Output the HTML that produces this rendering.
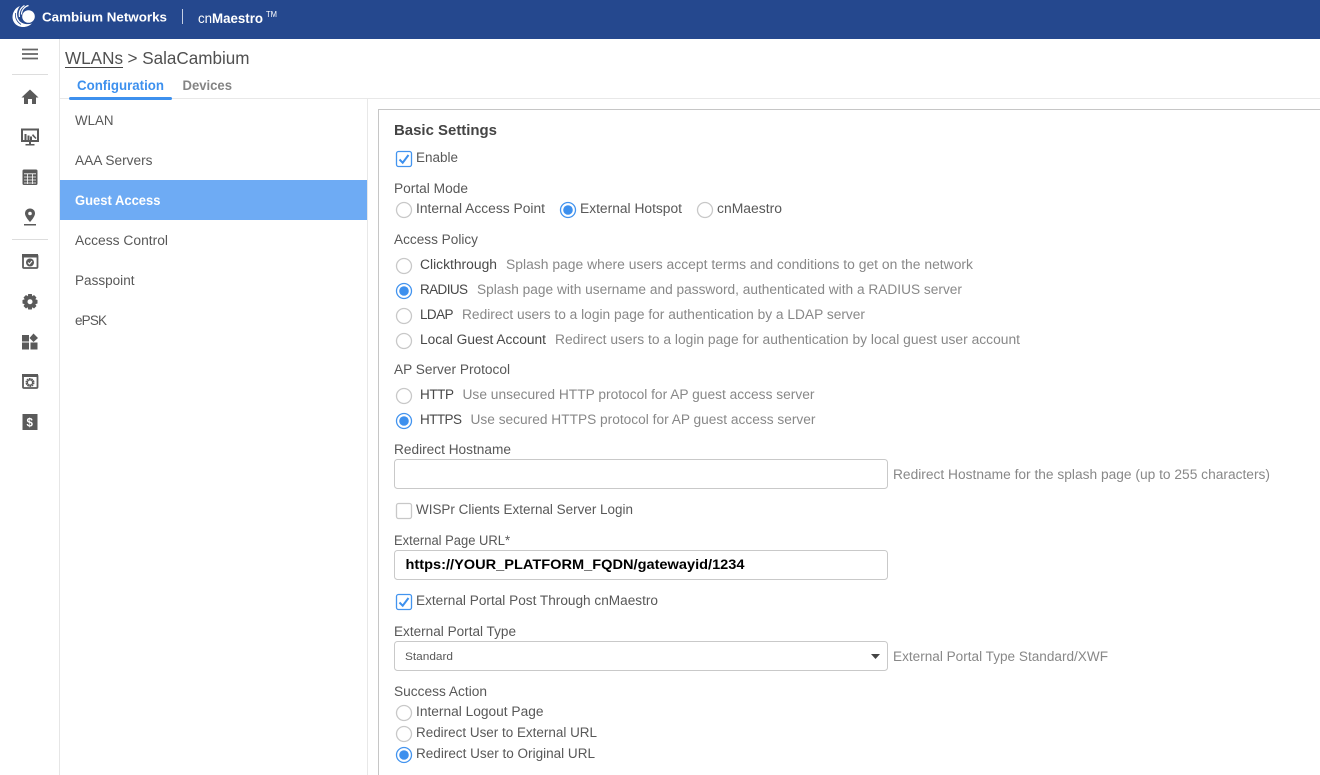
<!DOCTYPE html>
<html><head><meta charset="utf-8"><style>
html,body{margin:0;padding:0;background:#fff;width:1320px;height:775px;overflow:hidden}
svg{display:block}
text{font-family:"Liberation Sans",sans-serif;font-size:13.5px;fill:#585858}
.g{fill:#888}
.d{fill:#484848}
.i{fill:#5a5a5a}
</style></head><body>
<svg width="1320" height="775" viewBox="0 0 1320 775" xmlns="http://www.w3.org/2000/svg">
<rect width="1320" height="39" fill="#25488e"/>
<!-- logo -->
<path d="M20 6C15 8 12.500 12.500 12.500 17C12.500 22.500 17 27 23 27C26.500 27 29.500 25.800 32 23.500C27 25 21 24 18.500 19.500C16 15 17 9.500 20 6Z" fill="#fff"/>
<circle cx="28.500" cy="16.500" r="6.300" fill="#fff"/>
<path d="M24.500 5.500C20.500 8 18.500 12 19.500 17M28.500 5.500C24.500 6.500 21.500 10 21.500 14.500" stroke="#fff" stroke-width="1.200" fill="none"/>
<path d="M15.500 13C15 17 16.500 21.500 21 24.500" stroke="#25488e" stroke-width=".8" fill="none"/>
<text x="42" y="21.500" textLength="125" lengthAdjust="spacingAndGlyphs" style="fill:#fff;font-weight:700;font-size:13px">Cambium Networks</text>
<rect x="182" y="9" width="1" height="15" fill="#c5cfe4"/>
<text x="198" y="23" textLength="65" lengthAdjust="spacingAndGlyphs" style="fill:#fff;font-size:13.500px">cn<tspan font-weight="700">Maestro</tspan></text>
<text x="266" y="17" textLength="11" lengthAdjust="spacingAndGlyphs" style="fill:#fff;font-size:8px">TM</text>

<!-- rails -->
<rect x="59" y="39" width="1" height="736" fill="#e6e6e6"/>
<rect x="367" y="99" width="1" height="676" fill="#e8e8e8"/>
<rect x="60" y="98" width="1260" height="1" fill="#e8e8e8"/>

<!-- hamburger -->
<path d="M22 49.500H38M22 54H38M22 58.500H38" stroke="#666" stroke-width="1.800"/>
<rect x="12" y="74" width="36" height="1" fill="#ddd"/>
<!-- home -->
<path class="i" d="M30 89.500L38.500 97.500H36V104H32V99H28V104H24V97.500H21.500Z"/>
<!-- monitor -->
<path d="M22 129.500H38V141H22Z" fill="none" stroke="#5a5a5a" stroke-width="2"/>
<path class="i" d="M24.500 134H26.500V140H24.500ZM27.500 135.500H29.500V140H27.500ZM30 136.500H32V140H30ZM33 134L36.500 138L35.500 139L32 135.500Z"/>
<path class="i" d="M29 142H31V144H34.500V145.500H25.500V144H29Z"/>
<!-- table -->
<rect x="22.500" y="169.500" width="15" height="15.500" rx="1.500" class="i"/>
<path d="M24 173.800H36M24 177H36M24 180H36M24 183H36M27.500 174V184M32.500 174V184" stroke="#fff" stroke-width=".8"/>
<!-- pin -->
<path class="i" d="M30 208.500C27 208.500 25 210.700 25 213.500C25 216.800 30 222 30 222C30 222 35 216.800 35 213.500C35 210.700 33 208.500 30 208.500Z"/>
<circle cx="30" cy="213.500" r="1.800" fill="#fff"/>
<rect x="24" y="224" width="12" height="1.500" fill="#5a5a5a"/>
<rect x="12" y="239" width="36" height="1" fill="#ddd"/>
<!-- window check -->
<rect x="23" y="255" width="14.500" height="13" fill="#fff" stroke="#5a5a5a" stroke-width="1.800" rx="1"/>
<rect x="22" y="254" width="16" height="3.500" fill="#5a5a5a"/>
<circle cx="30" cy="262.500" r="4" fill="#5a5a5a"/>
<path d="M28 262.500L29.500 264L32 261" stroke="#fff" stroke-width="1" fill="none"/>
<!-- gear -->
<path class="i" d="M28.200 294H31.800L32.300 296.200L34 295L36.500 297.500L35.300 299.300L37.500 300V303.500L35.300 304.200L36.500 306L34 308.500L32.300 307.300L31.800 309.500H28.200L27.700 307.300L26 308.500L23.500 306L24.700 304.200L22.500 303.500V300L24.700 299.300L23.500 297.500L26 295L27.700 296.200Z"/>
<circle cx="30" cy="301.700" r="2.500" fill="#fff"/>
<!-- widgets -->
<path class="i" d="M22 335H29V341.500H22ZM22 342.500H29V349.500H22ZM30.500 342.500H37.500V349.500H30.500ZM33.500 333.500L38 338L33.500 342L29.500 338Z"/>
<!-- window gear -->
<rect x="23" y="375" width="14.500" height="13" fill="#fff" stroke="#5a5a5a" stroke-width="1.800" rx="1"/>
<rect x="22" y="374" width="16" height="3" fill="#5a5a5a"/>
<circle cx="30" cy="382.500" r="3.500" fill="none" stroke="#5a5a5a" stroke-width="2" stroke-dasharray="1.600 .6"/>
<circle cx="30" cy="382.500" r="2.600" fill="none" stroke="#5a5a5a" stroke-width="1.300"/>
<!-- dollar -->
<rect x="22.500" y="414" width="15" height="16" fill="#5a5a5a"/>
<text x="26.500" y="426.500" style="fill:#fff;font-size:11.500px;font-weight:700">$</text>

<!-- title -->
<text x="65" y="64" textLength="58" lengthAdjust="spacingAndGlyphs" style="font-size:17.500px;fill:#505050">WLANs</text>
<rect x="65" y="67" width="58" height="1" fill="#444"/>
<text x="127.500" y="64" textLength="122" lengthAdjust="spacingAndGlyphs" style="font-size:17.500px;fill:#505050">&gt; SalaCambium</text>
<text x="77" y="90" textLength="87" lengthAdjust="spacingAndGlyphs" style="fill:#3d90ee;font-weight:700">Configuration</text>
<text x="182.500" y="90" textLength="49.500" lengthAdjust="spacingAndGlyphs" style="fill:#848484;font-weight:700">Devices</text>
<rect x="69" y="97" width="103" height="3" rx="1.500" fill="#3d90ee"/>

<!-- left menu -->
<rect x="60" y="180" width="307" height="40" fill="#6eabf4"/>
<text x="75" y="125" textLength="38.500" lengthAdjust="spacingAndGlyphs">WLAN</text>
<text x="75" y="165" textLength="77.500" lengthAdjust="spacingAndGlyphs">AAA Servers</text>
<text x="75" y="205" textLength="85.500" lengthAdjust="spacingAndGlyphs" style="fill:#fff;font-weight:700">Guest Access</text>
<text x="75" y="245" textLength="93" lengthAdjust="spacingAndGlyphs">Access Control</text>
<text x="75" y="285" textLength="59.500" lengthAdjust="spacingAndGlyphs">Passpoint</text>
<text x="75" y="325" textLength="32" lengthAdjust="spacing">ePSK</text>

<!-- card -->
<path d="M1320 109.500H378.500V775" fill="none" stroke="#c6c6c6"/>
<text x="394" y="135" textLength="103" lengthAdjust="spacingAndGlyphs" style="fill:#444;font-size:14.500px;font-weight:700">Basic Settings</text>

<!-- enable -->
<rect x="396.500" y="151.500" width="15" height="15" rx="2" fill="#fff" stroke="#4394ef" stroke-width="1.300"/>
<path d="M399.500 159.500L402.700 162.700L408.500 155" fill="none" stroke="#3d90ee" stroke-width="2"/>
<text x="416" y="162" textLength="42" lengthAdjust="spacingAndGlyphs">Enable</text>

<text x="394" y="193" textLength="74" lengthAdjust="spacingAndGlyphs">Portal Mode</text>
<circle cx="404" cy="210" r="7.500" fill="#fff" stroke="#c8c8c8" stroke-width="1.300"/>
<text x="416" y="213" textLength="129" lengthAdjust="spacingAndGlyphs">Internal Access Point</text>
<circle cx="568" cy="210" r="7.500" fill="#fff" stroke="#4394ef" stroke-width="1.300"/><circle cx="568" cy="210" r="4.800" fill="#3d90ee"/>
<text x="580" y="213" textLength="102" lengthAdjust="spacingAndGlyphs">External Hotspot</text>
<circle cx="705" cy="210" r="7.500" fill="#fff" stroke="#c8c8c8" stroke-width="1.300"/>
<text x="717" y="213" textLength="65" lengthAdjust="spacingAndGlyphs">cnMaestro</text>

<text x="394" y="244" textLength="84" lengthAdjust="spacingAndGlyphs">Access Policy</text>
<circle cx="404" cy="266" r="7.500" fill="#fff" stroke="#c8c8c8" stroke-width="1.300"/>
<text x="420" y="269" textLength="77" lengthAdjust="spacingAndGlyphs" class="d">Clickthrough</text>
<text x="506" y="269" textLength="467" lengthAdjust="spacingAndGlyphs" class="g">Splash page where users accept terms and conditions to get on the network</text>
<circle cx="404" cy="291" r="7.500" fill="#fff" stroke="#4394ef" stroke-width="1.300"/><circle cx="404" cy="291" r="4.800" fill="#3d90ee"/>
<text x="420" y="294" textLength="48" lengthAdjust="spacing" class="d">RADIUS</text>
<text x="477" y="294" textLength="485" lengthAdjust="spacingAndGlyphs" class="g">Splash page with username and password, authenticated with a RADIUS server</text>
<circle cx="404" cy="316" r="7.500" fill="#fff" stroke="#c8c8c8" stroke-width="1.300"/>
<text x="420" y="319" textLength="33.500" lengthAdjust="spacing" class="d">LDAP</text>
<text x="462" y="319" textLength="403" lengthAdjust="spacingAndGlyphs" class="g">Redirect users to a login page for authentication by a LDAP server</text>
<circle cx="404" cy="341" r="7.500" fill="#fff" stroke="#c8c8c8" stroke-width="1.300"/>
<text x="420" y="344" textLength="126" lengthAdjust="spacingAndGlyphs" class="d">Local Guest Account</text>
<text x="555" y="344" textLength="465" lengthAdjust="spacingAndGlyphs" class="g">Redirect users to a login page for authentication by local guest user account</text>

<text x="394" y="374" textLength="116" lengthAdjust="spacingAndGlyphs">AP Server Protocol</text>
<circle cx="404" cy="396" r="7.500" fill="#fff" stroke="#c8c8c8" stroke-width="1.300"/>
<text x="420" y="399" textLength="34" lengthAdjust="spacing" class="d">HTTP</text>
<text x="462.500" y="399" textLength="352" lengthAdjust="spacingAndGlyphs" class="g">Use unsecured HTTP protocol for AP guest access server</text>
<circle cx="404" cy="421" r="7.500" fill="#fff" stroke="#4394ef" stroke-width="1.300"/><circle cx="404" cy="421" r="4.800" fill="#3d90ee"/>
<text x="420" y="424" textLength="42" lengthAdjust="spacing" class="d">HTTPS</text>
<text x="470.500" y="424" textLength="345" lengthAdjust="spacingAndGlyphs" class="g">Use secured HTTPS protocol for AP guest access server</text>

<text x="394" y="454" textLength="117" lengthAdjust="spacingAndGlyphs">Redirect Hostname</text>
<rect x="394.500" y="459.500" width="493" height="29" rx="3" fill="#fff" stroke="#c9c9c9"/>
<text x="893" y="479" textLength="377" lengthAdjust="spacingAndGlyphs" class="g">Redirect Hostname for the splash page (up to 255 characters)</text>

<rect x="396.500" y="503.500" width="15" height="15" rx="2" fill="#fff" stroke="#c8c8c8" stroke-width="1.300"/>
<text x="416" y="514" textLength="217" lengthAdjust="spacingAndGlyphs">WISPr Clients External Server Login</text>

<text x="394" y="545" textLength="116" lengthAdjust="spacingAndGlyphs">External Page URL*</text>
<rect x="394.500" y="550.500" width="493" height="29" rx="3" fill="#fff" stroke="#c9c9c9"/>
<text x="405.500" y="569" textLength="339" lengthAdjust="spacingAndGlyphs" style="fill:#000;font-weight:700;font-size:13.500px">https://YOUR_PLATFORM_FQDN/gatewayid/1234</text>

<rect x="396.500" y="594.500" width="15" height="15" rx="2" fill="#fff" stroke="#4394ef" stroke-width="1.300"/>
<path d="M399.500 602.500L402.700 605.700L408.500 598" fill="none" stroke="#3d90ee" stroke-width="2"/>
<text x="416" y="605" textLength="242" lengthAdjust="spacingAndGlyphs">External Portal Post Through cnMaestro</text>

<text x="394" y="636" textLength="122" lengthAdjust="spacingAndGlyphs">External Portal Type</text>
<rect x="394.500" y="641.500" width="493" height="29" rx="3" fill="#fff" stroke="#c9c9c9"/>
<text x="405" y="660" textLength="48" lengthAdjust="spacingAndGlyphs" style="font-size:11px">Standard</text>
<path d="M871 654H880L875.500 659Z" fill="#444"/>
<text x="893" y="661" textLength="215" lengthAdjust="spacingAndGlyphs" class="g">External Portal Type Standard/XWF</text>

<text x="394" y="696" textLength="93" lengthAdjust="spacingAndGlyphs">Success Action</text>
<circle cx="404" cy="713" r="7.500" fill="#fff" stroke="#c8c8c8" stroke-width="1.300"/>
<text x="416" y="716" textLength="127.500" lengthAdjust="spacingAndGlyphs">Internal Logout Page</text>
<circle cx="404" cy="734" r="7.500" fill="#fff" stroke="#c8c8c8" stroke-width="1.300"/>
<text x="416" y="737" textLength="181" lengthAdjust="spacingAndGlyphs">Redirect User to External URL</text>
<circle cx="404" cy="755" r="7.500" fill="#fff" stroke="#4394ef" stroke-width="1.300"/><circle cx="404" cy="755" r="4.800" fill="#3d90ee"/>
<text x="416" y="758" textLength="179" lengthAdjust="spacingAndGlyphs">Redirect User to Original URL</text>
</svg>
</body></html>
